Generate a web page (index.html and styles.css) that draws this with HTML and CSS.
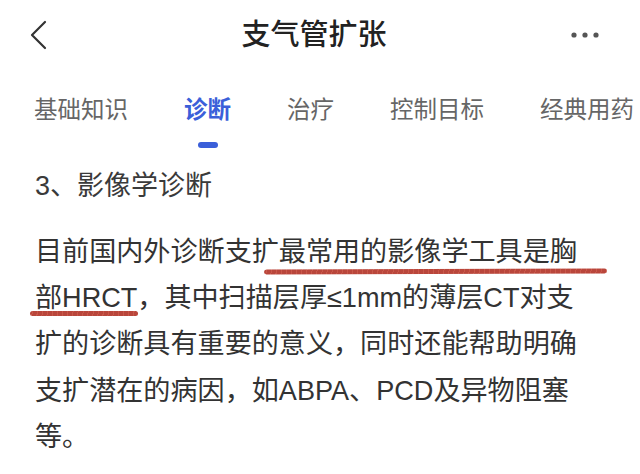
FILE: index.html
```html
<!DOCTYPE html>
<html lang="zh-CN">
<head>
    <meta charset="UTF-8">
    <meta name="viewport" content="width=device-width, initial-scale=1.0">
    <title>支气管扩张</title>
    <link rel="stylesheet" href="styles.css">
</head>
<body>
    <header class="nav-bar">
        <div class="nav-left">
            <svg class="back-icon" width="18" height="30" viewBox="0 0 18 30">
                <polyline points="16,2 3,15 16,28" fill="none" stroke="#333" stroke-width="2.2" stroke-linecap="round" stroke-linejoin="round"/>
            </svg>
        </div>
        <h1 class="nav-title">支气管扩张</h1>
        <div class="nav-right">
            <svg class="more-icon" width="28" height="6" viewBox="0 0 28 6">
                <circle cx="3" cy="3" r="2.6" fill="#555"/>
                <circle cx="14" cy="3" r="2.6" fill="#555"/>
                <circle cx="25" cy="3" r="2.6" fill="#555"/>
            </svg>
        </div>
    </header>

    <nav class="tabs">
        <div class="tab">基础知识</div>
        <div class="tab active">诊断</div>
        <div class="tab">治疗</div>
        <div class="tab">控制目标</div>
        <div class="tab">经典用药</div>
    </nav>

    <main class="article">
        <h2 class="section-title">3、影像学诊断</h2>
        <p class="content">
            目前国内外诊断支扩<span class="mark mark-first">最常用的影像学工具是胸</span><br>
            <span class="mark mark-second">部HRCT</span>，其中扫描层厚≤1mm的薄层CT对支<br>
            扩的诊断具有重要的意义，同时还能帮助明确<br>
            支扩潜在的病因，如ABPA、PCD及异物阻塞<br>
            等。
        </p>
    </main>
</body>
</html>
```

FILE: styles.css
```css
* {
    box-sizing: border-box;
}

body {
    margin: 0;
    width: 640px;
    overflow: hidden;
    background-color: #fff;
    color: #333;
    font-family: "Liberation Sans", "Noto Sans CJK SC", sans-serif;
}

.nav-bar {
    display: grid;
    grid-template-columns: 1fr auto 1fr;
    align-items: center;
    height: 70px;
    padding: 0 41px 0 29px;
}

.nav-left {
    display: flex;
    align-items: center;
}

.nav-right {
    display: flex;
    justify-content: flex-end;
    align-items: center;
}

.back-icon,
.more-icon {
    display: block;
}

.nav-title {
    margin: 0;
    font-size: 29px;
    font-weight: 500;
    line-height: 40px;
    color: #222;
}

.tabs {
    display: flex;
    gap: 56px;
    padding: 24px 0 0 34px;
    white-space: nowrap;
    overflow: hidden;
}

.tab {
    display: flex;
    flex-direction: column;
    align-items: center;
    flex-shrink: 0;
    font-size: 23.5px;
    line-height: 32px;
    color: #666;
}

.tab::after {
    content: "";
    width: 20px;
    height: 6px;
    margin-top: 16px;
    border-radius: 3px;
}

.tab.active {
    color: #3b5fd9;
    font-weight: 700;
}

.tab.active::after {
    background-color: #3b5fd9;
}

.article {
    padding: 20px 35px 0;
}

.section-title {
    margin: 0 0 25px;
    font-size: 27px;
    font-weight: 400;
    line-height: 36px;
    color: #3a3a3a;
}

.content {
    margin: 0;
    font-size: 27.1px;
    line-height: 46.2px;
    color: #333;
}

.mark {
    position: relative;
}

.mark::after {
    content: "";
    position: absolute;
    border-radius: 3px;
    background: repeating-linear-gradient(100deg, #b3362a 0 2px, #c4493a 2px 3px, #b3362a 3px 5px);
    opacity: 0.92;
}

.mark-first::after {
    left: -15px;
    right: -30px;
    bottom: -7px;
    height: 5px;
    transform: rotate(-0.2deg);
}

.mark-second::after {
    left: -5px;
    right: -1px;
    bottom: -3px;
    height: 5px;
}
```
